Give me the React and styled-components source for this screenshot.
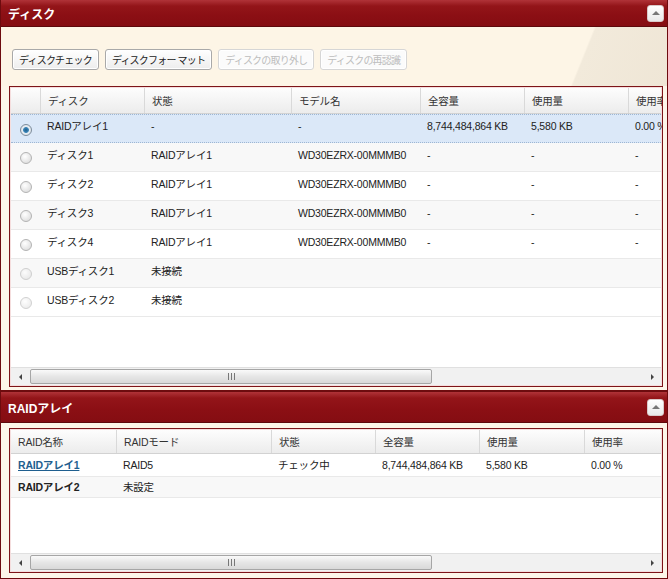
import React from 'react';
import styled, { createGlobalStyle, css } from 'styled-components';

const GlobalStyle = createGlobalStyle`
    html, body {
        margin: 0;
        padding: 0;
        background: #fdf6e9;
    }
    body {
        font-family: 'Liberation Sans', 'Noto Sans CJK JP', sans-serif;
        font-size: 10.5px;
        letter-spacing: -0.2px;
        color: #333;
    }
`;

const Page = styled.div`
    width: 668px;
    height: 579px;
    display: flex;
    flex-direction: column;
    overflow: hidden;
`;

const Panel = styled.section`
    display: flex;
    flex-direction: column;
    flex: ${p => (p.grow ? 1 : 'none')};
    height: ${p => (p.height ? `${p.height}px` : 'auto')};
    box-sizing: border-box;
    border: 1px solid #6d0b0e;
    border-top: ${p => (p.cut ? 'none' : '1px solid #6d0b0e')};
    background: #fdf6e9;
`;

const PanelHeader = styled.header`
    height: ${p => p.height}px;
    flex: none;
    display: flex;
    align-items: center;
    justify-content: space-between;
    padding: 0 3px 0 7px;
    box-sizing: border-box;
    background: linear-gradient(#b03338 0, #931519 6px, #8b0f14 60%, #850d12 100%);
    border-bottom: 1px solid #5e090c;
`;

const Title = styled.h2`
    margin: 0;
    color: #fff;
    font-size: 12px;
    font-weight: bold;
    letter-spacing: 0;
`;

const CollapseButton = styled.button`
    width: 17px;
    height: 17px;
    padding: 0;
    border: 1px solid #d9c9c9;
    border-radius: 3px;
    background: linear-gradient(#ffffff, #e9e9e9);
    display: flex;
    align-items: center;
    justify-content: center;
    &::after {
        content: '';
        border-left: 4px solid transparent;
        border-right: 4px solid transparent;
        border-bottom: 4px solid #777;
    }
`;

const Toolbar = styled.div`
    height: 59px;
    flex: none;
    box-sizing: border-box;
    padding: 22px 0 0 11px;
    display: flex;
    gap: 6px;
    align-items: flex-start;
    background: linear-gradient(112deg, #fdf5e6 0, #fdf5e6 86%, #f2eadb 86.3%, #efe6d6 100%);
`;

const ToolButton = styled.button`
    height: 21px;
    padding: 0 6px;
    box-sizing: border-box;
    font-family: inherit;
    font-size: 10px;
    letter-spacing: -0.8px;
    border-radius: 3px;
    border: 1px solid #a9a9a9;
    background: linear-gradient(#ffffff, #ededed);
    color: #222;
    white-space: nowrap;
    box-shadow: inset 0 0 0 1px #fff;
    ${p =>
        p.disabled &&
        css`
            color: #bdbdbd;
            border-color: #d6d6d6;
            background: #fbfbfb;
        `}
`;

const Body = styled.div`
    flex: 1;
    display: flex;
    padding: ${p => p.pad};
    min-height: 0;
`;

const Frame = styled.div`
    flex: 1;
    display: flex;
    flex-direction: column;
    border: 1px solid #7d1418;
    box-shadow: inset 0 0 0 1px #f5dede;
    background: #fff;
    overflow: hidden;
    padding: 1px;
`;

const GridRow = styled.div`
    display: grid;
    grid-template-columns: ${p => p.cols};
    height: ${p => p.h}px;
    box-sizing: border-box;
    flex: none;
    white-space: nowrap;
    background: ${p => (p.selected ? '#dbe8f8' : p.alt ? '#f8f8f8' : '#fff')};
    border-bottom: 1px ${p => (p.selected ? 'dotted #9db6d3' : 'solid #e9e9e9')};
    border-top: ${p => (p.selected ? '1px dotted #9db6d3' : 'none')};
`;

const HeadRow = styled(GridRow)`
    background: linear-gradient(#fdfdfd, #ececec);
    border-bottom: 1px solid #d2d2d2;
`;

const HeadCell = styled.div`
    display: flex;
    align-items: center;
    padding-left: 7px;
    color: #333;
    border-left: ${p => (p.first ? 'none' : '1px solid #d9d9d9')};
`;

const Cell = styled.div`
    display: flex;
    align-items: ${p => (p.center ? 'center' : 'flex-start')};
    justify-content: ${p => (p.center ? 'center' : 'flex-start')};
    padding-top: ${p => (p.center ? 0 : p.pt)}px;
    padding-left: ${p => (p.center ? 0 : 7)}px;
    line-height: 14px;
    color: #222;
    font-weight: ${p => (p.bold ? 'bold' : 'normal')};
`;

const Link = styled.a`
    color: #1f5f8f;
    font-weight: bold;
    text-decoration: underline;
`;

const Radio = styled.span`
    width: 12px;
    height: 12px;
    border-radius: 50%;
    box-sizing: border-box;
    border: 1px solid #b3b3b3;
    background: radial-gradient(circle at 40% 35%, #ffffff, #d6d6d6);
    margin-top: 2px;
    ${p =>
        p.checked &&
        css`
            border-color: #7d8c9b;
            background: radial-gradient(circle, #1e5e8c 0, #3d86b8 2.5px, #e9eef3 3.3px, #cfd8e0 100%);
        `}
    ${p =>
        p.dim &&
        css`
            opacity: 0.6;
        `}
`;

const Filler = styled.div`
    flex: 1;
`;

const ScrollBar = styled.div`
    height: 17px;
    flex: none;
    display: flex;
    align-items: center;
    background: #f1f1f1;
    border-top: 1px solid #e0e0e0;
`;

const Arrow = styled.span`
    width: 18px;
    display: flex;
    justify-content: center;
    &::before {
        content: '';
        border-top: 3px solid transparent;
        border-bottom: 3px solid transparent;
        ${p =>
            p.right
                ? css`
                      border-left: 3px solid #444;
                  `
                : css`
                      border-right: 3px solid #444;
                  `}
    }
`;

const Thumb = styled.div`
    width: 402px;
    height: 15px;
    box-sizing: border-box;
    border: 1px solid #a6a6a6;
    border-radius: 2px;
    background: linear-gradient(#fafafa, #e6e6e6 50%, #d9d9d9);
    display: flex;
    align-items: center;
    justify-content: center;
    margin-left: 1px;
`;

const Grip = styled.span`
    width: 7px;
    height: 7px;
    background: repeating-linear-gradient(90deg, #777 0, #777 1px, transparent 1px, transparent 3px);
`;

const Track = styled.div`
    flex: 1;
`;

const Scroller = () => (
    <ScrollBar>
        <Arrow />
        <Thumb>
            <Grip />
        </Thumb>
        <Track />
        <Arrow right />
    </ScrollBar>
);

const diskCols = '29px 104px 147px 129px 104px 104px 100px';
const diskHead = ['', 'ディスク', '状態', 'モデル名', '全容量', '使用量', '使用率'];
const disks = [
    ['RAIDアレイ1', '-', '-', '8,744,484,864 KB', '5,580 KB', '0.00 %'],
    ['ディスク1', 'RAIDアレイ1', 'WD30EZRX-00MMMB0', '-', '-', '-'],
    ['ディスク2', 'RAIDアレイ1', 'WD30EZRX-00MMMB0', '-', '-', '-'],
    ['ディスク3', 'RAIDアレイ1', 'WD30EZRX-00MMMB0', '-', '-', '-'],
    ['ディスク4', 'RAIDアレイ1', 'WD30EZRX-00MMMB0', '-', '-', '-'],
    ['USBディスク1', '未接続', '', '', '', ''],
    ['USBディスク2', '未接続', '', '', '', ''],
];

const raidCols = '105px 155px 104px 104px 105px 80px';
const raidHead = ['RAID名称', 'RAIDモード', '状態', '全容量', '使用量', '使用率'];

const App = () => (
    <Page>
        <GlobalStyle />
        <Panel height={391} cut>
            <PanelHeader height={27}>
                <Title>ディスク</Title>
                <CollapseButton aria-label="折りたたむ" />
            </PanelHeader>
            <Toolbar>
                <ToolButton>ディスクチェック</ToolButton>
                <ToolButton>ディスクフォー マット</ToolButton>
                <ToolButton disabled>ディスクの取り外し</ToolButton>
                <ToolButton disabled>ディスクの再認識</ToolButton>
            </Toolbar>
            <Body pad="0 4px 3px 8px">
                <Frame>
                    <HeadRow cols={diskCols} h={26}>
                        {diskHead.map((h, i) => (
                            <HeadCell key={i} first={i === 0}>
                                {h}
                            </HeadCell>
                        ))}
                    </HeadRow>
                    {disks.map((row, r) => (
                        <GridRow key={r} cols={diskCols} h={29} selected={r === 0} alt={r % 2 === 1}>
                            <Cell center>
                                <Radio checked={r === 0} dim={r >= 5} />
                            </Cell>
                            {row.map((v, i) => (
                                <Cell key={i} pt={r === 0 ? 4 : 5}>
                                    {v}
                                </Cell>
                            ))}
                        </GridRow>
                    ))}
                    <Filler />
                    <Scroller />
                </Frame>
            </Body>
        </Panel>
        <Panel grow>
            <PanelHeader height={31}>
                <Title>RAIDアレイ</Title>
                <CollapseButton aria-label="折りたたむ" />
            </PanelHeader>
            <Body pad="5px 4px 5px 8px">
                <Frame>
                    <HeadRow cols={raidCols} h={24}>
                        {raidHead.map((h, i) => (
                            <HeadCell key={i} first={i === 0}>
                                {h}
                            </HeadCell>
                        ))}
                    </HeadRow>
                    <GridRow cols={raidCols} h={23}>
                        <Cell pt={4}>
                            <Link href="#">RAIDアレイ1</Link>
                        </Cell>
                        <Cell pt={4}>RAID5</Cell>
                        <Cell pt={4}>チェック中</Cell>
                        <Cell pt={4}>8,744,484,864 KB</Cell>
                        <Cell pt={4}>5,580 KB</Cell>
                        <Cell pt={4}>0.00 %</Cell>
                    </GridRow>
                    <GridRow cols={raidCols} h={21} alt>
                        <Cell pt={3} bold>
                            RAIDアレイ2
                        </Cell>
                        <Cell pt={3}>未設定</Cell>
                        <Cell />
                        <Cell />
                        <Cell />
                        <Cell />
                    </GridRow>
                    <Filler />
                    <Scroller />
                </Frame>
            </Body>
        </Panel>
    </Page>
);

export default App;
